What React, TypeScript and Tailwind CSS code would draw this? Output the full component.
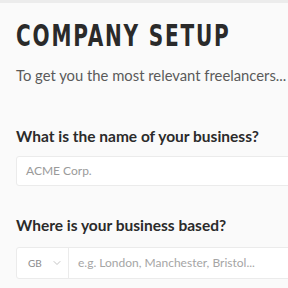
import { ChevronDown } from "lucide-react";

const App = () => {
  return (
    <div className="h-[288px] w-[288px] overflow-hidden bg-[#fafafa] border-t-[3px] border-[#ececec] font-['Lato',sans-serif]">
      <div className="pl-4 pt-[13px]">
        {/* Title */}
        <h1 className="whitespace-nowrap font-['DejaVu_Sans',sans-serif] font-stretch-condensed font-bold text-[31px] leading-[38px] tracking-[2.5px] text-[#2a2a2a]">
          <span className="inline-block origin-left scale-x-[0.72]">COMPANY SETUP</span>
        </h1>
        <p className="mt-[11px] text-[14.8px] leading-5 text-[#5a5a5a] whitespace-nowrap">
          To get you the most relevant freelancers...
        </p>

        {/* Business name */}
        <label className="block mt-[41px] text-[15.5px] leading-5 font-bold text-[#2b2b2b] whitespace-nowrap">
          What is the name of your business?
        </label>
        <div className="mt-[10px] h-[30px] w-[300px] bg-white border border-[#ebebeb] rounded-[3px] flex items-center pl-[9px]">
          <span className="text-[12px] text-[#9a9a9a]">ACME Corp.</span>
        </div>

        {/* Location */}
        <label className="block mt-[29px] text-[15.5px] leading-5 font-bold text-[#2b2b2b] whitespace-nowrap">
          Where is your business based?
        </label>
        <div className="mt-[12px] h-[32px] w-[300px] bg-white border border-[#ebebeb] rounded-[3px] flex items-center">
          <div className="w-[52px] h-full flex items-center pl-[11px] gap-[9px] border-r border-[#ebebeb]">
            <span className="text-[10px] text-[#8a8a8a]">GB</span>
            <ChevronDown size={12} strokeWidth={1.5} className="text-[#b0b0b0]" />
          </div>
          <span className="ml-[9px] text-[12px] text-[#a5a5a5] whitespace-nowrap">
            e.g. London, Manchester, Bristol...
          </span>
        </div>
      </div>
    </div>
  );
};

export default App;
